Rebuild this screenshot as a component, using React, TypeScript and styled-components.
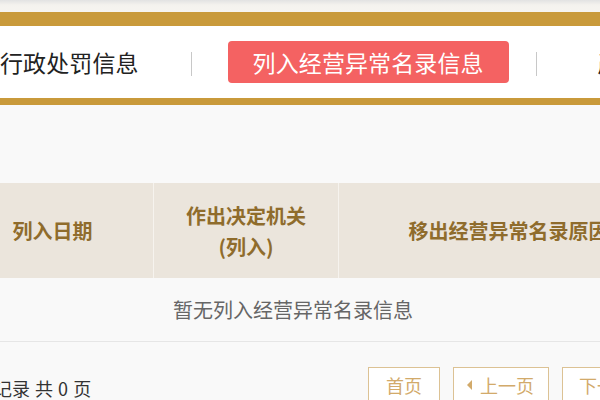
import React from 'react';
import styled, { createGlobalStyle } from 'styled-components';

const GlobalStyle = createGlobalStyle`
  html, body {
    margin: 0;
    padding: 0;
    overflow: hidden;
    background: #f9f9f9;
    font-family: "Noto Sans CJK SC", "Noto Sans", "Liberation Sans", sans-serif;
  }
`;

const TopStrip = styled.div`
  height: 12px;
  background: linear-gradient(#e2e2e2, #f4f2ee 5px, #f6f4f0);
`;

const NavBand = styled.div`
  height: 72px;
  background: #fff;
  border-top: 14px solid #c99a3b;
  border-bottom: 7px solid #c99a3b;
  overflow: hidden;
`;

const NavRow = styled.div`
  display: flex;
  align-items: center;
  height: 100%;
  margin-left: -25px;
  white-space: nowrap;
`;

const Tab = styled.div<{ $active?: boolean }>`
  flex: none;
  height: 42px;
  line-height: 42px;
  padding: 0 25px;
  font-size: 23px;
  letter-spacing: 0.1px;
  border-radius: 4px;
  color: ${p => (p.$active ? '#fff' : '#222')};
  background: ${p => (p.$active ? '#f46262' : 'transparent')};
`;

const Divider = styled.span`
  flex: none;
  width: 1px;
  height: 24px;
  margin: 4px 36px 0 27px;
  background: #c8c8c8;
`;

const Content = styled.div`
  padding-top: 78px;
  background: #f9f9f9;
`;

const Table = styled.div`
  margin-left: -48px;
  width: 900px;
`;

const HeadRow = styled.div`
  display: grid;
  grid-template-columns: 201px 185px 340px 1fr;
  height: 95px;
  background: #ebe5dc;
`;

const HeadCell = styled.div`
  display: flex;
  align-items: center;
  justify-content: center;
  text-align: center;
  font-size: 20px;
  font-weight: 700;
  line-height: 31px;
  color: #8f6c2c;
  & + & {
    border-left: 1px solid #f6f3ee;
  }
`;

const EmptyRow = styled.div<{ $width: number }>`
  width: ${p => p.$width}px;
  height: 63px;
  line-height: 63px;
  text-align: center;
  font-size: 20px;
  color: #666;
`;

const RowLine = styled.div`
  height: 1px;
  background: #e6e6e6;
`;

const Footer = styled.div`
  display: flex;
  align-items: flex-start;
  padding-top: 25px;
  white-space: nowrap;
`;

const Info = styled.div`
  width: 368px;
  margin-left: -62px;
  padding-top: 8px;
  font-size: 18px;
  word-spacing: 1px;
  color: #333;
  flex: none;
`;

const Pager = styled.div`
  display: flex;
  gap: 13px;
  margin-left: 62px;
`;

const PageButton = styled.button<{ $pad: string }>`
  display: flex;
  align-items: center;
  gap: 8px;
  height: 36px;
  padding: ${p => p.$pad};
  border: 1px solid #dcc294;
  background: #fff;
  color: #d2aa6a;
  font-family: inherit;
  font-size: 18px;
  cursor: pointer;
`;

const Arrow = styled.span<{ $dir: 'left' | 'right' }>`
  width: 0;
  height: 0;
  border-top: 5px solid transparent;
  border-bottom: 5px solid transparent;
  ${p =>
    p.$dir === 'left' ? 'border-right: 5px solid #d2aa6a;' : 'border-left: 5px solid #d2aa6a;'}
`;

export default function App() {
  return (
    <>
      <GlobalStyle />
      <TopStrip />
      <NavBand>
        <NavRow>
          <Tab>行政处罚信息</Tab>
          <Divider />
          <Tab $active>列入经营异常名录信息</Tab>
          <Divider />
          <Tab>严重违法失信信息</Tab>
        </NavRow>
      </NavBand>
      <Content>
        <Table>
          <HeadRow>
            <HeadCell>列入日期</HeadCell>
            <HeadCell>
              作出决定机关
              <br />
              (列入)
            </HeadCell>
            <HeadCell>移出经营异常名录原因</HeadCell>
            <HeadCell>移出日期</HeadCell>
          </HeadRow>
          <EmptyRow $width={682}>暂无列入经营异常名录信息</EmptyRow>
          <RowLine />
        </Table>
        <Footer>
          <Info>共 0 条记录 共 0 页</Info>
          <Pager>
            <PageButton $pad="0 17px">首页</PageButton>
            <PageButton $pad="0 14px 0 13px">
              <Arrow $dir="left" />
              上一页
            </PageButton>
            <PageButton $pad="0 13px 0 16px">
              下一页
              <Arrow $dir="right" />
            </PageButton>
          </Pager>
        </Footer>
      </Content>
    </>
  );
}
